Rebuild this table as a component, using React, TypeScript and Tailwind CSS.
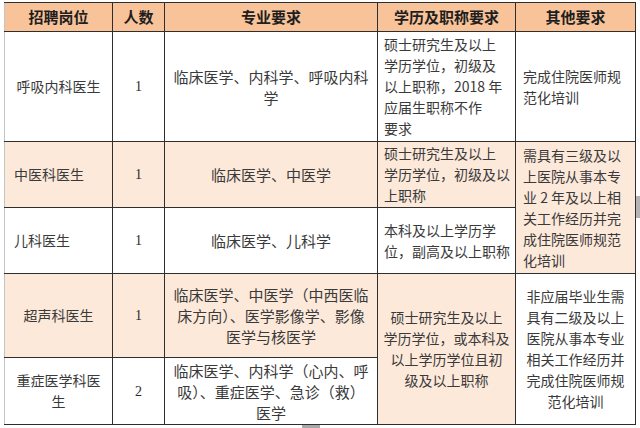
import React from "react";

const FONT = "'Noto Sans CJK SC', 'Noto Sans', sans-serif";

export default function App() {
  const b = "border border-[#2e2e2e]";
  const body = "text-[14px] leading-[21px] text-[#3a3a3a] whitespace-nowrap";
  const num = "text-center text-[14px] text-[#2a2a2a] font-['Liberation_Serif',serif] antialiased";
  return (
    <div className="relative w-[640px] h-[428px] bg-white overflow-hidden" style={{ fontFamily: FONT }}>
      <div className="pl-[4px] pt-[2px]">
        <table className="table-fixed border-collapse w-[631px] border-l border-l-[#c4c4c4]">
          <colgroup>
            <col className="w-[108px]" />
            <col className="w-[52px]" />
            <col className="w-[213px]" />
            <col className="w-[138px]" />
            <col className="w-[120px]" />
          </colgroup>
          <tbody>
            <tr className="bg-[#f9c39a]">
              <td className={`${b} border-l-[#c4c4c4] h-[29px] p-0 text-center text-[15px] font-bold text-[#1e1e1e]`}>招聘岗位</td>
              <td className={`${b} p-0 text-center text-[15px] font-bold text-[#1e1e1e]`}>人数</td>
              <td className={`${b} p-0 text-center text-[15px] font-bold text-[#1e1e1e]`}>专业要求</td>
              <td className={`${b} p-0 text-center text-[15px] font-bold text-[#1e1e1e]`}>学历及职称要求</td>
              <td className={`${b} p-0 text-center text-[15px] font-bold text-[#1e1e1e]`}>其他要求</td>
            </tr>
            <tr>
              <td className={`${b} border-l-[#c4c4c4] h-[110px] p-0 text-center ${body}`}>呼吸内科医生</td>
              <td className={`${b} p-0 ${num}`}>1</td>
              <td className={`${b} p-0 text-center ${body} text-[15px]`}>
                临床医学、内科学、呼吸内科<br />学
              </td>
              <td className={`${b} px-[6px] py-0 text-left ${body}`}>
                硕士研究生及以上<br />学历学位，初级及<br />以上职称，2018 年<br />应届生职称不作<br />要求
              </td>
              <td className={`${b} px-[7px] py-0 text-left ${body}`}>
                完成住院医师规<br />范化培训
              </td>
            </tr>
            <tr>
              <td className={`${b} border-l-[#c4c4c4] bg-[#fde9da] h-[66px] pl-[9px] pr-0 py-0 text-left ${body}`}>中医科医生</td>
              <td className={`${b} bg-[#fde9da] p-0 ${num}`}>1</td>
              <td className={`${b} bg-[#fde9da] p-0 text-center ${body} text-[15px]`}>临床医学、中医学</td>
              <td className={`${b} bg-[#fde9da] px-[6px] py-0 text-left ${body}`}>
                硕士研究生及以上<br />学历学位，初级及以<br />上职称
              </td>
              <td rowSpan={2} className={`${b} bg-[#fde9da] px-[7px] py-0 text-left ${body} leading-[21.5px]`}>
                需具有三级及以<br />上医院从事本专<br />业 2 年及以上相<br />关工作经历并完<br />成住院医师规范<br />化培训
              </td>
            </tr>
            <tr>
              <td className={`${b} border-l-[#c4c4c4] h-[66px] pl-[9px] pr-0 py-0 text-left ${body}`}>儿科医生</td>
              <td className={`${b} p-0 ${num}`}>1</td>
              <td className={`${b} p-0 text-center ${body} text-[15px]`}>临床医学、儿科学</td>
              <td className={`${b} px-[6px] py-0 text-left ${body}`}>
                本科及以上学历学<br />位，副高及以上职称
              </td>
            </tr>
            <tr>
              <td className={`${b} border-l-[#c4c4c4] bg-[#fde9da] h-[84px] p-0 text-center ${body}`}>超声科医生</td>
              <td className={`${b} bg-[#fde9da] p-0 ${num}`}>1</td>
              <td className={`${b} bg-[#fde9da] p-0 text-center ${body} text-[15px]`}>
                临床医学、中医学（中西医临<br />床方向）、医学影像学、影像<br />医学与核医学
              </td>
              <td rowSpan={2} className={`${b} bg-[#fde9da] p-0 text-center ${body} leading-[20.5px]`}>
                硕士研究生及以上<br />学历学位，或本科及<br />以上学历学位且初<br />级及以上职称
              </td>
              <td rowSpan={2} className={`${b} p-0 text-center ${body} leading-[21.8px]`}>
                非应届毕业生需<br />具有二级及以上<br />医院从事本专业<br />相关工作经历并<br />完成住院医师规<br />范化培训
              </td>
            </tr>
            <tr>
              <td className={`${b} border-l-[#c4c4c4] h-[67px] p-0 text-center ${body}`}>
                重症医学科医<br />生
              </td>
              <td className={`${b} p-0 ${num}`}>2</td>
              <td className={`${b} p-0 text-center ${body} text-[15px]`}>
                临床医学、内科学（心内、呼<br />吸）、重症医学、急诊（救）<br />医学
              </td>
            </tr>
          </tbody>
        </table>
      </div>
      <div className="absolute left-[636px] top-[196px] w-[4px] h-[22px] bg-[#b4b4b4]" />
      <div className="absolute left-[302px] top-[425px] w-[18px] h-[3px] bg-[#a8a8a8]" />
    </div>
  );
}
